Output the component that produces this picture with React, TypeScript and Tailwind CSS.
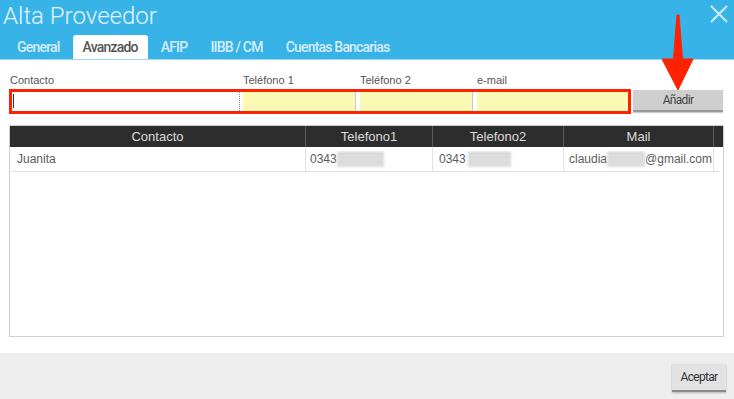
import React from "react";

const sans = "font-['Liberation_Sans',Arial,sans-serif]";
const rob = "font-['Roboto',sans-serif]";

function Blur({ w }: { w: number }) {
  return (
    <span
      className="inline-block h-[15px] bg-[#dcdcdc] blur-[1.2px] align-middle border-t border-[#c4c4c4]"
      style={{ width: w }}
    />
  );
}

export default function App() {
  return (
    <div className="relative w-[734px] h-[399px] bg-white overflow-hidden flex flex-col">
      {/* Header */}
      <div className="h-[60px] bg-[#38b3e8] flex flex-col border-b border-[#9ed8f3]">
        <div className="h-[36px] flex items-start justify-between">
          <div className={`${rob} font-light text-[24px] leading-[30px] text-[#e6f4fc] pl-[3px] pt-[1px]`}>
            Alta Proveedor
          </div>
          <svg width="20" height="20" viewBox="0 0 20 20" className="mt-[4px] mr-[5px]">
            <path d="M2 2 L18 18 M18 2 L2 18" stroke="#ffffff" strokeOpacity="0.75" strokeWidth="2" />
          </svg>
        </div>
        <div className={`${rob} font-medium text-[14px] tracking-[-0.8px] flex gap-[3px] ml-[7px] h-[24px]`}>
          <div className="px-[10px] leading-[24px] text-[#d6edf9]">General</div>
          <div className="px-[10px] leading-[24px] text-[#555] bg-white rounded-t-[3px]">Avanzado</div>
          <div className="px-[10px] leading-[24px] text-[#d6edf9]">AFIP</div>
          <div className="px-[10px] leading-[24px] text-[#d6edf9]">IIBB / CM</div>
          <div className="px-[10px] leading-[24px] text-[#d6edf9]">Cuentas Bancarias</div>
        </div>
      </div>

      {/* Body */}
      <div className="flex-1 flex flex-col">
        <div className={`${sans} text-[11px] leading-[13px] text-[#555] flex pt-[14px] pl-[10px]`}>
          <div className="w-[233px]">Contacto</div>
          <div className="w-[117px]">Teléfono 1</div>
          <div className="w-[117px]">Teléfono 2</div>
          <div>e-mail</div>
        </div>
        <div className="flex items-start mt-[2px] pl-[9px]">
          <div className="w-[622px] h-[25px] border-[3px] border-[#ff2200] flex bg-white">
            <div className="w-[228px] h-full bg-white border-r border-dotted border-[#7a8a99] relative">
              <div className="absolute left-[1px] top-[2px] w-px h-[14px] bg-[#333]" />
            </div>
            <div className="w-[3px]" />
            <div className="w-[113px] h-full bg-[#fafab4] border-r border-[#c8c8c8]" />
            <div className="w-[4px]" />
            <div className="w-[113px] h-full bg-[#fafab4] border-r border-[#c8c8c8]" />
            <div className="w-[4px]" />
            <div className="flex-1 h-full bg-[#fafab4]" />
          </div>
          <button
            className={`${rob} ml-[2px] mt-[1px] w-[90px] h-[22px] bg-[#cfcfcf] border-b-2 border-[#9a9a9a] shadow-[0_1px_1px_rgba(0,0,0,0.2)] text-[12px] tracking-[-0.7px] text-[#444]`}
          >
            Añadir
          </button>
        </div>

        {/* Table */}
        <div className="mt-[11px] ml-[9px] w-[715px] h-[212px] border border-[#cfcfcf] flex flex-col">
          <div className={`${sans} h-[21px] bg-[#2d2d2d] flex text-[13px] text-[#dcdcdc] leading-[21px]`}>
            <div className="w-[295px] text-center">Contacto</div>
            <div className="w-[127px] text-center border-l border-[#5a5a5a]">Telefono1</div>
            <div className="w-[131px] text-center border-l border-[#5a5a5a]">Telefono2</div>
            <div className="w-[150px] text-center border-l border-[#5a5a5a]">Mail</div>
            <div className="flex-1 border-l border-[#5a5a5a]" />
          </div>
          <div className={`${sans} flex text-[12px] text-[#5c5c5c] h-[25px] ml-[2px] w-[708px] border-b border-[#e2e2e2]`}>
            <div className="w-[293px] pl-[5px] leading-[24px]">Juanita</div>
            <div className="w-[127px] pl-[4px] leading-[24px] border-l border-[#e2e2e2] flex items-center">
              <span>0343</span>
              <Blur w={47} />
            </div>
            <div className="w-[131px] pl-[6px] leading-[24px] border-l border-[#e2e2e2] flex items-center">
              <span>0343</span>
              <span className="inline-block w-[2px]" />
              <Blur w={43} />
            </div>
            <div className="w-[151px] pl-[5px] leading-[24px] border-l border-r border-[#e2e2e2] flex items-center">
              <span>claudia</span>
              <Blur w={38} />
              <span>@gmail.com</span>
            </div>
          </div>
        </div>
      </div>

      {/* Footer */}
      <div className="h-[46px] bg-[#eeeeee] flex justify-end items-start pt-[11px] pr-[8px]">
        <button
          className={`${rob} w-[54px] h-[28px] bg-[#e2e2e2] border-b-2 border-[#8a8a8a] shadow-[0_1px_2px_rgba(0,0,0,0.25)] text-[12px] tracking-[-0.7px] text-[#333]`}
        >
          Aceptar
        </button>
      </div>

      {/* Red arrow annotation */}
      <svg
        className="absolute left-[656px] top-[12px]"
        width="44"
        height="82"
        viewBox="0 0 44 82"
      >
        <path
          d="M21 3 L23 3 L26.5 47 L37 47 L22 78 L6 47 L17.5 47 Z"
          fill="#ff2200"
          stroke="#ff2200"
          strokeWidth="1"
          strokeLinejoin="round"
        />
      </svg>
    </div>
  );
}
